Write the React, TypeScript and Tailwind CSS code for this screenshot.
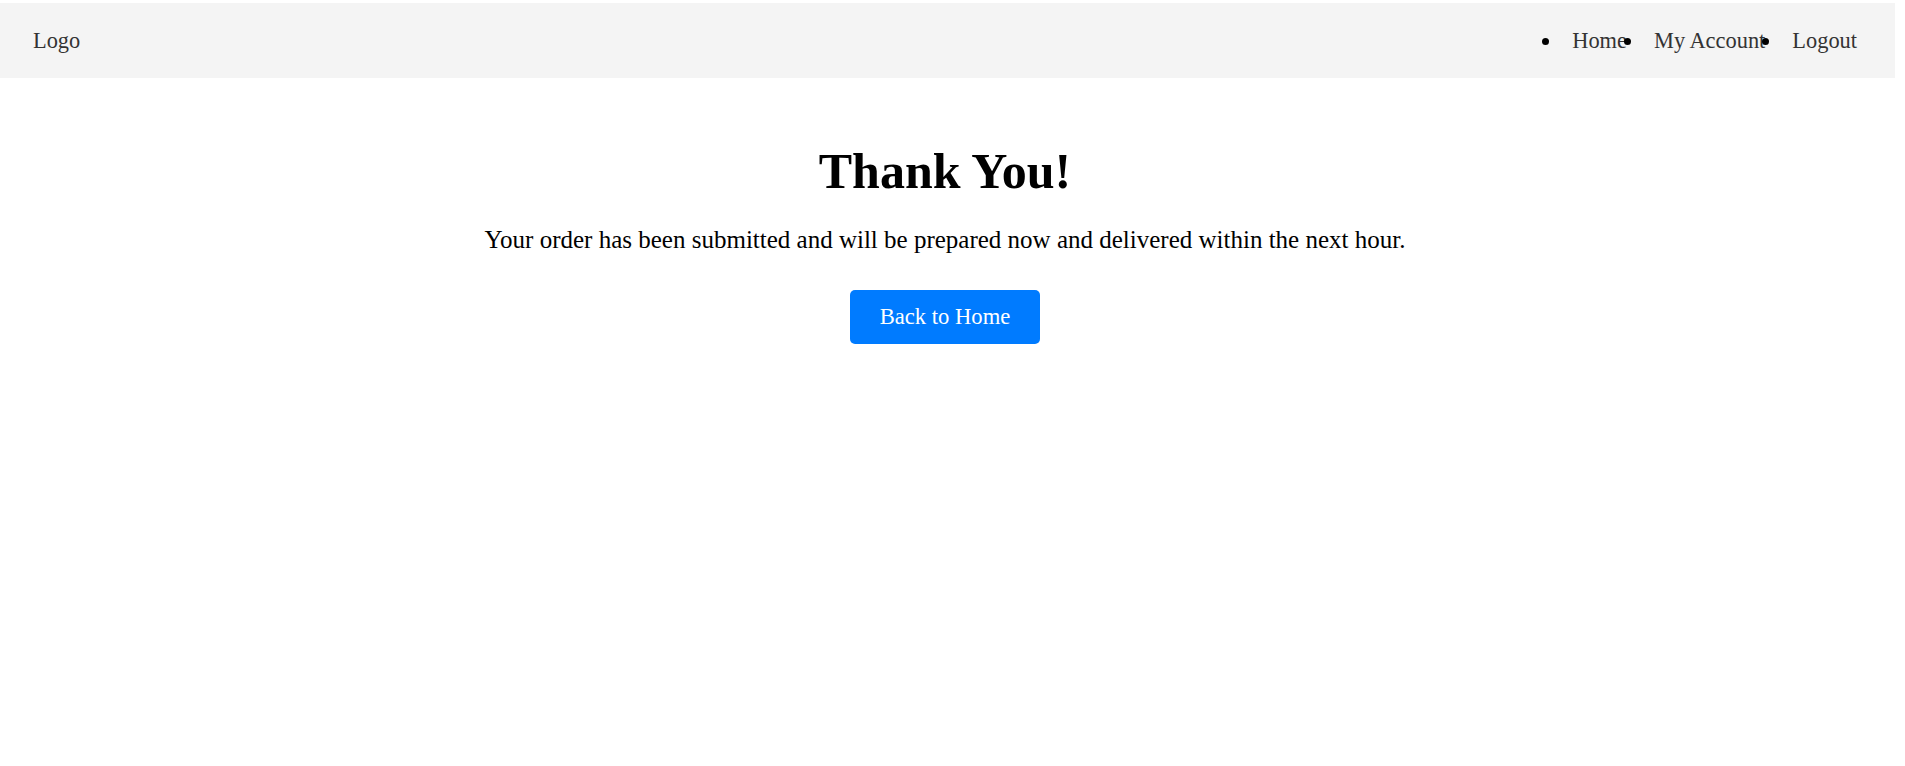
const navLinks = ["Home", "My Account", "Logout"];

const App = () => {
  return (
    <div className="w-[1895px] pt-[3px] font-['Liberation_Serif',serif] text-black">
      <header className="flex items-center justify-between bg-[#f4f4f4] h-[75px] pl-[33px] pr-[38px]">
        <a href="#" className="text-[22.4px] text-[#333]">
          Logo
        </a>
        <ul className="flex list-disc gap-[17px] text-[22.4px]">
          {navLinks.map((link) => (
            <li key={link} className="pl-[10px]">
              <a href="#" className="text-[#333]">
                {link}
              </a>
            </li>
          ))}
        </ul>
      </header>
      <main className="flex flex-col items-center pt-[56px] pr-[5px]">
        <h1 className="text-[50px] font-bold">Thank You!</h1>
        <p className="mt-[12px] text-[25px]">
          Your order has been submitted and will be prepared now and delivered
          within the next hour.
        </p>
        <button
          type="button"
          className="mt-[31px] h-[54px] w-[190px] rounded-[5px] bg-[#007bff] text-[22.6px] text-white"
        >
          Back to Home
        </button>
      </main>
    </div>
  );
};

export default App;
